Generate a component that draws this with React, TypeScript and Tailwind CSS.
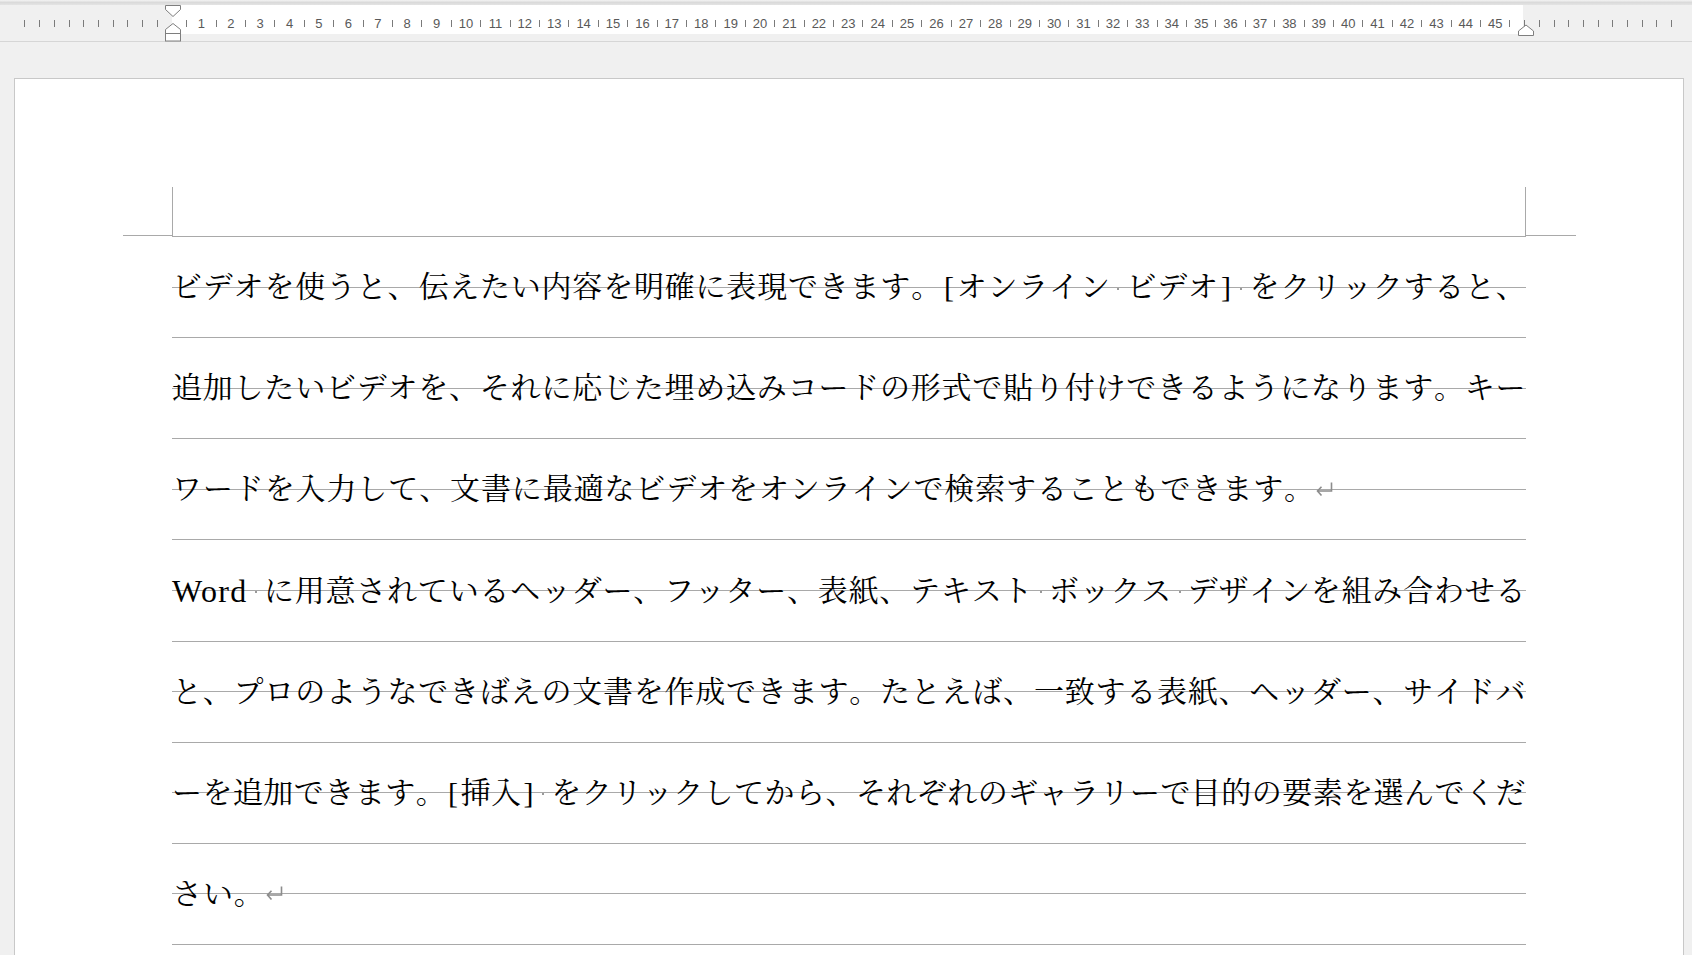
import React from "react";

const TEXT_FONT =
  "font-['Liberation_Serif','Noto_Serif_CJK_JP','Noto_Sans_CJK_JP',serif]";

function tokenize(s: string): string[] {
  const out: string[] = [];
  let buf = "";
  for (const ch of Array.from(s)) {
    if (/[A-Za-z]/.test(ch)) {
      buf += ch;
    } else {
      if (buf) {
        out.push(buf);
        buf = "";
      }
      out.push(ch);
    }
  }
  if (buf) out.push(buf);
  return out;
}

function SpaceMark() {
  return (
    <span className="flex w-[15px] shrink-0 items-center justify-center self-stretch pt-[3px]">
      <span className="h-[2px] w-[2px] bg-[#9a9a9a]" />
    </span>
  );
}

function Token({ t }: { t: string }) {
  if (t === " ") return <SpaceMark />;
  const latin = /^[A-Za-z]+$/.test(t);
  if (latin)
    return (
      <span className="shrink-0 text-[32px] tracking-[1.3px]">{t}</span>
    );
  if (t === "[" || t === "]")
    return <span className="shrink-0 px-[2px]">{t}</span>;
  return <span className="shrink-0">{t}</span>;
}

function ParaMark() {
  return (
    <svg width="19" height="17" viewBox="0 0 19 17" className="shrink-0">
      <path
        d="M16.5 1.5 V10 H2.5 M6.5 5.8 L2.5 10 L6.5 14.5"
        fill="none"
        stroke="#8c8c8c"
        strokeWidth="1.6"
      />
    </svg>
  );
}

function Row({
  text,
  justify,
  mark,
}: {
  text: string;
  justify: boolean;
  mark?: boolean;
}) {
  const toks = tokenize(text);
  return (
    <div className="grid h-[101.1px]">
      <div className="col-start-1 row-start-1 flex flex-col">
        <div className="h-[50.55px] border-b border-[#a9a9a9]" />
        <div className="h-[50.55px] border-b border-[#a9a9a9]" />
      </div>
      <div
        className={`col-start-1 row-start-1 flex items-center pb-[1px] text-[30px] leading-none text-black ${TEXT_FONT} ${
          justify ? "justify-between" : "gap-[0.9px]"
        }`}
      >
        {toks.map((t, i) => (
          <Token key={i} t={t} />
        ))}
        {mark ? <ParaMark /> : null}
      </div>
    </div>
  );
}

function Ruler() {
  const cells: React.ReactNode[] = [];
  for (let j = -10; j <= 102; j++) {
    let content: React.ReactNode = null;
    if (j === 0) {
      content = null;
    } else if (j > 0 && j <= 90 && j % 2 === 0) {
      content = (
        <span className="whitespace-nowrap text-[13px] leading-none text-[#595959]">
          {j / 2}
        </span>
      );
    } else {
      content = <span className="h-[7px] w-px bg-[#7a7a7a]" />;
    }
    cells.push(
      <div
        key={j}
        className="flex h-[8px] w-[14.708px] shrink-0 items-center justify-center"
      >
        {content}
      </div>
    );
  }
  return (
    <div className="relative h-[42px] border-b border-[#d6d6d6] bg-[#f0f0f0]">
      <div className="h-[5px] bg-linear-to-b from-[#f4f4f4] via-[#dadada] to-[#e4e4e4]" />
      <div className="grid h-[29px]">
        <div className="col-start-1 row-start-1 ml-[172px] h-[28.5px] w-[1351px] bg-white" />
        <div className="col-start-1 row-start-1 mt-[14px] flex h-[8px] pl-[17.57px] font-['Liberation_Sans',Arial,sans-serif]">
          {cells}
        </div>
      </div>
      {/* indent markers */}
      <svg
        className="absolute left-[164px] top-[4px]"
        width="18"
        height="38"
        viewBox="0 0 18 38"
      >
        <path
          d="M1.5 1.5 H16.5 V5.5 L9 12.5 L1.5 5.5 Z"
          fill="#ffffff"
          stroke="#7e7e7e"
          strokeWidth="1"
        />
        <path
          d="M9 19.5 L16.5 25.5 V29.5 H1.5 V25.5 Z"
          fill="#ffffff"
          stroke="#7e7e7e"
          strokeWidth="1"
        />
        <rect
          x="1.5"
          y="29.5"
          width="15"
          height="7.5"
          fill="#ffffff"
          stroke="#7e7e7e"
          strokeWidth="1"
        />
      </svg>
      <svg
        className="absolute left-[1516.5px] top-[4px]"
        width="18"
        height="34"
        viewBox="0 0 18 34"
      >
        <path
          d="M9 21 L16.5 27 V31.5 H1.5 V27 Z"
          fill="#ffffff"
          stroke="#7e7e7e"
          strokeWidth="1"
        />
      </svg>
    </div>
  );
}

export default function App() {
  return (
    <div className="h-[955px] w-[1692px] overflow-hidden bg-[#f0f0f0]">
      <Ruler />
      <div className="ml-[14px] mt-[36px] h-[900px] w-[1670px] border border-b-0 border-[#c8c8c8] bg-white pt-[107.7px]">
        <div className="flex items-start">
          <div className="ml-[108px] h-[49.6px] w-[49px] border-b border-[#a9a9a9]" />
          <div className="h-[50.5px] w-[1354px] border-x border-b border-[#a9a9a9]" />
          <div className="h-[49.5px] w-[50px] border-b border-[#a9a9a9]" />
        </div>
        <div className="ml-[157px] w-[1354px]">
          <Row
            justify
            text="ビデオを使うと、伝えたい内容を明確に表現できます。[オンライン ビデオ] をクリックすると、"
          />
          <Row
            justify
            text="追加したいビデオを、それに応じた埋め込みコードの形式で貼り付けできるようになります。キー"
          />
          <Row
            justify={false}
            mark
            text="ワードを入力して、文書に最適なビデオをオンラインで検索することもできます。"
          />
          <Row
            justify
            text="Word に用意されているヘッダー、フッター、表紙、テキスト ボックス デザインを組み合わせる"
          />
          <Row
            justify
            text="と、プロのようなできばえの文書を作成できます。たとえば、一致する表紙、ヘッダー、サイドバ"
          />
          <Row
            justify
            text="ーを追加できます。[挿入] をクリックしてから、それぞれのギャラリーで目的の要素を選んでくだ"
          />
          <Row justify={false} mark text="さい。" />
        </div>
      </div>
    </div>
  );
}
